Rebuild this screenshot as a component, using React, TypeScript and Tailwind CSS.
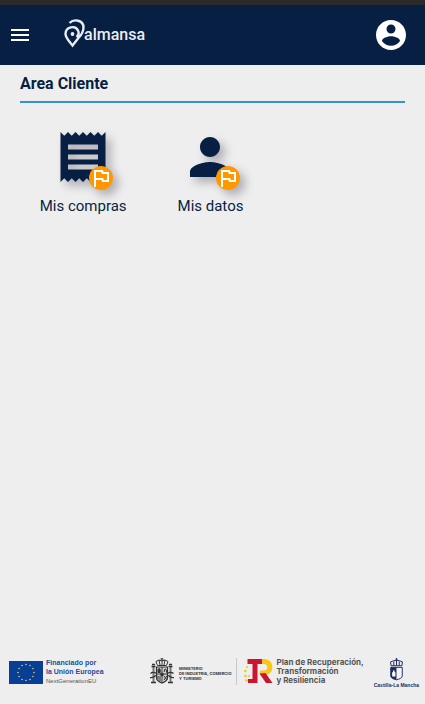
import React from 'react';

const FLAG_STARS = Array.from({ length: 12 }, (_, i) => {
  const a = (i * Math.PI) / 6;
  return { x: 17 + 8 * Math.sin(a), y: 11.5 - 8 * Math.cos(a) };
});

function MenuIcon() {
  return (
    <svg viewBox="0 0 24 24" className="size-6" fill="currentColor" aria-hidden="true">
      <path d="M3 18h18v-2H3v2zm0-5h18v-2H3v2zm0-7v2h18V6H3z" />
    </svg>
  );
}

function AccountIcon() {
  return (
    <svg viewBox="0 0 24 24" className="size-9" fill="currentColor" aria-hidden="true">
      <path d="M12 2C6.48 2 2 6.48 2 12s4.48 10 10 10 10-4.48 10-10S17.52 2 12 2zm0 3c1.66 0 3 1.34 3 3s-1.34 3-3 3-3-1.34-3-3 1.34-3 3-3zm0 14.2c-2.5 0-4.71-1.28-6-3.22.03-1.99 4-3.08 6-3.08 1.99 0 5.97 1.09 6 3.08-1.29 1.94-3.5 3.22-6 3.22z" />
    </svg>
  );
}

function Logo() {
  return (
    <a href="#inicio" className="flex items-center text-[#e9edf3]" aria-label="almansa">
      <svg viewBox="0 0 21 29" className="h-[29px] w-[21px]" fill="none" stroke="currentColor" strokeWidth="2.4" aria-hidden="true">
        <path d="M5.500 4C10-.5 19.500 1 19.500 8.500c0 5-2.500 8-5.500 11L8.500 26.500C4 21 1.500 18.500 1.500 15c0-7.500 10-9 12.500-3.500 1.200 2.500.5 5-1.500 6.500" />
        <circle cx="8.500" cy="15" r="1.900" fill="currentColor" stroke="none" />
      </svg>
      <span className="-ml-px pt-1 font-['Roboto',sans-serif] text-[16px] leading-5 font-medium">almansa</span>
    </a>
  );
}

function FlagBadge() {
  return (
    <span className="absolute right-0 -bottom-[3px] size-6 rounded-full bg-[#ff9800] text-white">
      <svg viewBox="0 0 24 24" className="size-6" fill="currentColor" aria-hidden="true">
        <path d="M12.360 6l.4 2H18v6h-3.360l-.4-2H7V6h5.360M14 4H5v17h2v-7h5.600l.4 2h7V6h-5.600L14 4z" />
      </svg>
    </span>
  );
}

function Tile({ label, path }: { label: string; path: string }) {
  return (
    <a href="#seccion" className="flex flex-col items-center text-[#061f43]">
      <span className="relative size-[60px] drop-shadow-[5px_5px_5px_rgba(0,0,30,0.28)]">
        <svg viewBox="0 0 24 24" className="size-[60px]" fill="currentColor" aria-hidden="true">
          <path d={path} />
        </svg>
        <FlagBadge />
      </span>
      <span className="mt-2 text-[15px] leading-[22px]">{label}</span>
    </a>
  );
}

function EuFlag() {
  return (
    <svg viewBox="0 0 34 23" className="h-[23px] w-[34px]" aria-hidden="true">
      <rect width="34" height="23" fill="#093e96" />
      {FLAG_STARS.map((s, i) => (
        <circle key={i} cx={s.x} cy={s.y} r="0.8" fill="#d5d660" />
      ))}
    </svg>
  );
}

function SpainArms() {
  return (
    <svg viewBox="0 0 24 27" className="h-[27px] w-6" fill="none" stroke="#333" aria-hidden="true">
      <path d="M7.500 7.500 6 3.500l3-1.500 3 1 3-1 3 1.500-1.500 4zM12 0v7M9 2l1 5M15 2l-1 5M10.500 1h3" strokeWidth="1" />
      <path d="M6.500 9h11v11c0 3-3 4-5.500 5-2.500-1-5.500-2-5.500-5z" fill="#ccc" strokeWidth="1.200" />
      <path d="M12 9v15M6.500 16h11" strokeWidth="0.900" />
      <path d="M8 14.500v-3l1-1 1.200 1v3zM8 18v3.500M10 18v5" fill="#333" strokeWidth="1" />
      <path d="m14 14 1-3 1.500 1v2.500M14 18l3 4M17 18l-3 4" strokeWidth="1" />
      <circle cx="12" cy="16.500" r="1.400" fill="#333" />
      <path d="M3.500 9v15M20.500 9v15" strokeWidth="2" stroke="#777" />
      <path d="M1.500 8.500h4M1 24.500h5M18.500 8.500h4M18 24.500h5M2 6.500h3M19 6.500h3" strokeWidth="1.300" />
      <path d="M.5 15.500c2-2 5-1 6 0M0 19.500c2 1 4-1 6-2M23.500 15.500c-2-2-5-1-6 0M24 19.500c-2 1-4-1-6-2" strokeWidth="1.200" />
    </svg>
  );
}

function RecoveryMark() {
  return (
    <svg viewBox="0 0 29 25" className="h-[25px] w-[29px]" aria-hidden="true">
      <path d="M17 0h3c11 0 11 16 1 16h-5v-4.500h4c4.500 0 4.500-6.500 0-6.500h-3z" fill="#f9c613" />
      <path d="M3.500 0H18v5h-4.500v19H4v-4h4.500V5h-5z" fill="#c9152d" />
      <path d="m15.500 14.500 6-.5L28.500 24H22z" fill="#c9152d" />
      <g fill="#f9c613">
        <circle cx="3" cy="8" r="1" />
        <circle cx="1.300" cy="12" r="1.300" />
        <circle cx="1.500" cy="17" r="1.300" />
        <circle cx="5" cy="17" r="1" />
        <circle cx="2.500" cy="21.500" r="1.300" />
      </g>
    </svg>
  );
}

function CastillaArms() {
  return (
    <svg viewBox="0 0 12 21" className="h-[23px] w-[13px]" fill="none" stroke="#202d5c" aria-hidden="true">
      <path d="M1 7 .5 3.500 3 2.500 6 2l3 .5 2.500 1L11 7zM6 0v7M3.500 3v4M8.500 3v4M5 1h2" strokeWidth="0.900" />
      <path d="M.7 8.500h10.600v8c0 2-3 3-5.300 3.500C3.700 19.500.7 18.500.7 16.500z" fill="#f4f4f6" strokeWidth="0.900" />
      <path d="M.7 8.500H6V20C3.700 19.500.7 18.500.7 16.500z" fill="#202d5c" stroke="none" />
      <path d="M2 17v-4h.8v-1.500h1.400V13H5v4z" fill="#fff" stroke="none" />
    </svg>
  );
}

export default function App() {
  return (
    <div className="flex min-h-screen flex-col bg-[#eeeeee] font-['Roboto',sans-serif] text-[#061f43]">
      <header className="border-t-[5px] border-[#2b2b2b] bg-[#061f43]">
        <div className="flex h-[60px] items-center px-2 text-white">
          <button type="button" aria-label="Menú">
            <MenuIcon />
          </button>
          <div className="ml-8 grow pb-1">
            <Logo />
          </div>
          <button type="button" aria-label="Cuenta" className="mr-2">
            <AccountIcon />
          </button>
        </div>
      </header>

      <main className="grow px-5 pt-[9px]">
        <h1 className="border-b-2 border-[#3a8fd9] pb-[7px] text-[16px] leading-5 font-bold">Area Cliente</h1>
        <nav className="grid grid-cols-3 gap-px pt-6 pr-1">
          <Tile
            label="Mis compras"
            path="M18 17H6v-2h12v2zm0-4H6v-2h12v2zm0-4H6V7h12v2zM3 22l1.500-1.500L6 22l1.500-1.500L9 22l1.500-1.500L12 22l1.500-1.500L15 22l1.500-1.500L18 22l1.500-1.500L21 22V2l-1.500 1.500L18 2l-1.500 1.500L15 2l-1.500 1.500L12 2l-1.500 1.500L9 2 7.500 3.500 6 2 4.500 3.500 3 2v20z"
          />
          <Tile
            label="Mis datos"
            path="M12 12c2.210 0 4-1.790 4-4s-1.790-4-4-4-4 1.790-4 4 1.790 4 4 4zm0 2c-2.670 0-8 1.340-8 4v2h16v-2c0-2.660-5.330-4-8-4z"
          />
        </nav>
      </main>

      <footer className="flex items-start pr-[6px] pb-[15px] pl-[9px] whitespace-nowrap">
        <div className="flex items-center gap-[3px] text-[#234c9a]">
          <EuFlag />
          <p className="font-['Liberation_Sans',sans-serif] text-[7px] leading-[9px] font-bold">
            Financiado por
            <br />
            la Unión Europea
            <br />
            <span className="text-[6px] font-normal text-[#555]">NextGenerationEU</span>
          </p>
        </div>
        <div className="mr-[10px] ml-auto flex items-center">
          <div className="flex items-center gap-[5px] border-r border-[#c8c8c8] pr-[5px]">
            <SpainArms />
            <p className="pt-1 font-['Inter',sans-serif] text-[4px] leading-[5px] font-bold text-[#333]">
              MINISTERIO
              <br />
              DE INDUSTRIA, COMERCIO
              <br />
              Y TURISMO
            </p>
          </div>
          <div className="ml-[7px] flex items-center gap-[3px]">
            <RecoveryMark />
            <p className="font-['Inter',sans-serif] text-[8px] leading-[9px] font-bold text-[#555]">
              Plan de Recuperación,
              <br />
              Transformación
              <br />y Resiliencia
            </p>
          </div>
        </div>
        <div className="flex flex-col items-center text-[#202d5c]">
          <CastillaArms />
          <p className="font-['Liberation_Sans',sans-serif] text-[5px] leading-2 font-bold">Castilla-La Mancha</p>
        </div>
      </footer>
    </div>
  );
}
